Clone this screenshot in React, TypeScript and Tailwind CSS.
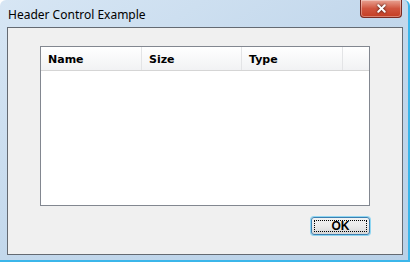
import { X } from 'lucide-react';

const columns = [
  { label: 'Name', width: 'w-[101px]' },
  { label: 'Size', width: 'w-[100px]' },
  { label: 'Type', width: 'w-[101px]' },
];

function TitleBar() {
  return (
    <div className="relative h-[27px] flex items-center pl-[8px] pt-[2px]">
      <span className="text-[12px] text-black font-['Noto_Sans',sans-serif] leading-none">
        Header Control Example
      </span>
      <div className="absolute right-[6px] top-0 w-[42px] h-[18px] rounded-b-[4px] border border-[#7a2a22] border-t-0 bg-gradient-to-b from-[#e8a293] via-[#d0553f] to-[#c43d22] flex items-center justify-center shadow-[inset_0_0_0_1px_rgba(255,255,255,0.35)]">
        <X size={13} strokeWidth={3.5} className="text-white drop-shadow-[0_0_1px_rgba(0,0,0,0.8)]" />
      </div>
    </div>
  );
}

function HeaderList() {
  return (
    <div className="w-[330px] h-[160px] border border-[#828790] bg-white">
      <div className="flex h-[24px] bg-gradient-to-b from-white to-[#f1f2f4] border-b border-[#d5d5d5]">
        {columns.map((c) => (
          <div
            key={c.label}
            className={`${c.width} border-r border-[#e3e4e6] flex items-center pl-[7px] pt-[3px] text-[11px] font-bold text-black font-['DejaVu_Sans',sans-serif]`}
          >
            {c.label}
          </div>
        ))}
      </div>
    </div>
  );
}

export default function App() {
  return (
    <div className="w-[410px] h-[262px] bg-gradient-to-br from-[#d7e6f4] via-[#c3d8ec] to-[#b9d1e8] border-r-2 border-b-2 border-[#3bb6ea] rounded-tl-[6px] rounded-tr-[6px] flex flex-col">
      <TitleBar />
      <div className="mx-[7px] w-[396px] h-[228px] bg-[#f0f0f0] border border-[#646a72] flex flex-col">
        <div className="pl-[32px] pt-[18px]">
          <HeaderList />
        </div>
        <div className="flex justify-end pr-[32px] pt-[11px]">
          <button className="w-[59px] h-[18px] rounded-[3px] border border-[#3c7fb1] bg-gradient-to-b from-[#f2f2f2] via-[#ebebeb] to-[#d6d6d6] shadow-[0_0_0_1px_#8fd6f2] p-[2px]">
            <div className="w-full h-full border border-dotted border-black flex items-center justify-center text-[12px] font-bold text-black font-['Liberation_Sans',sans-serif] leading-none">
              OK
            </div>
          </button>
        </div>
      </div>
    </div>
  );
}
